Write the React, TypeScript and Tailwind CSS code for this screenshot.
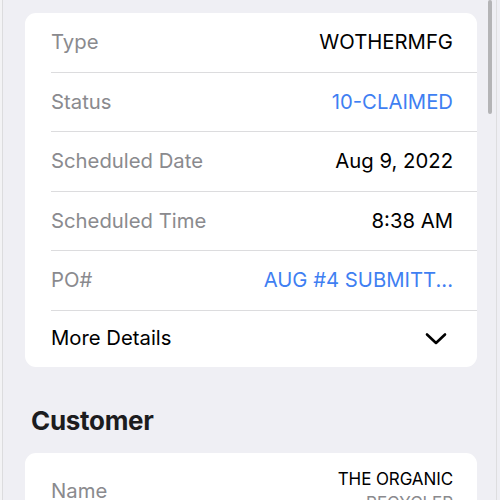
import React from "react";

const rows: { label: string; value: string; blue?: boolean }[] = [
  { label: "Type", value: "WOTHERMFG" },
  { label: "Status", value: "10-CLAIMED", blue: true },
  { label: "Scheduled Date", value: "Aug 9, 2022" },
  { label: "Scheduled Time", value: "8:38 AM" },
  { label: "PO#", value: "AUG #4 SUBMITT...", blue: true },
];

export default function App() {
  return (
    <div
      className="relative w-[500px] h-[500px] overflow-hidden bg-[#efeff4]"
      style={{ fontFamily: "Inter, 'Noto Sans', sans-serif" }}
    >
      <div className="absolute left-0 top-0 h-full w-[3px] bg-[#f3f3f5] border-r border-[#dcdcde]" />
      <div className="absolute right-[8px] top-0 w-[4px] h-[114px] rounded-full bg-[#b4b4b6]" />
      <div className="absolute right-[3px] top-0 h-full w-px bg-[#dedee0]" />

      <div className="pl-[25px] pr-[23px] pt-[13px]">
        <div className="bg-white rounded-[11px] pl-[26px]">
          {rows.map((r) => (
            <div
              key={r.label}
              className="h-[59.5px] flex items-center justify-between pr-[24px] border-b border-[#dcdcde] text-[20.3px]"
            >
              <span className="text-[#8a8a8e]">{r.label}</span>
              <span className={r.blue ? "text-[#3f7ff2]" : "text-black"}>{r.value}</span>
            </div>
          ))}
          <div className="h-[56px] flex items-center justify-between pr-[30px] text-[20.3px]">
            <span className="text-black">More Details</span>
            <svg width="22" height="14" viewBox="0 0 22 14" fill="none">
              <path d="M2 2.5 L11 11 L20 2.5" stroke="black" strokeWidth="2.6" strokeLinecap="round" strokeLinejoin="round" />
            </svg>
          </div>
        </div>

        <div className="pl-[6px] pt-[38px] pb-[16px] text-[26px] font-bold text-[#1c1c1e] tracking-[-0.3px] leading-[32px]">
          Customer
        </div>

        <div className="bg-white rounded-[11px] pl-[26px] pr-[24px] pt-[14px] flex justify-between">
          <span className="text-[#8a8a8e] text-[20.3px] leading-[24px] pt-[12px]">Name</span>
          <div className="text-right text-[17px] leading-[24px] tracking-[-0.1px]">
            <div className="text-black">THE ORGANIC</div>
            <div className="text-[#8a8a8e]">RECYCLER</div>
          </div>
        </div>
      </div>
    </div>
  );
}
